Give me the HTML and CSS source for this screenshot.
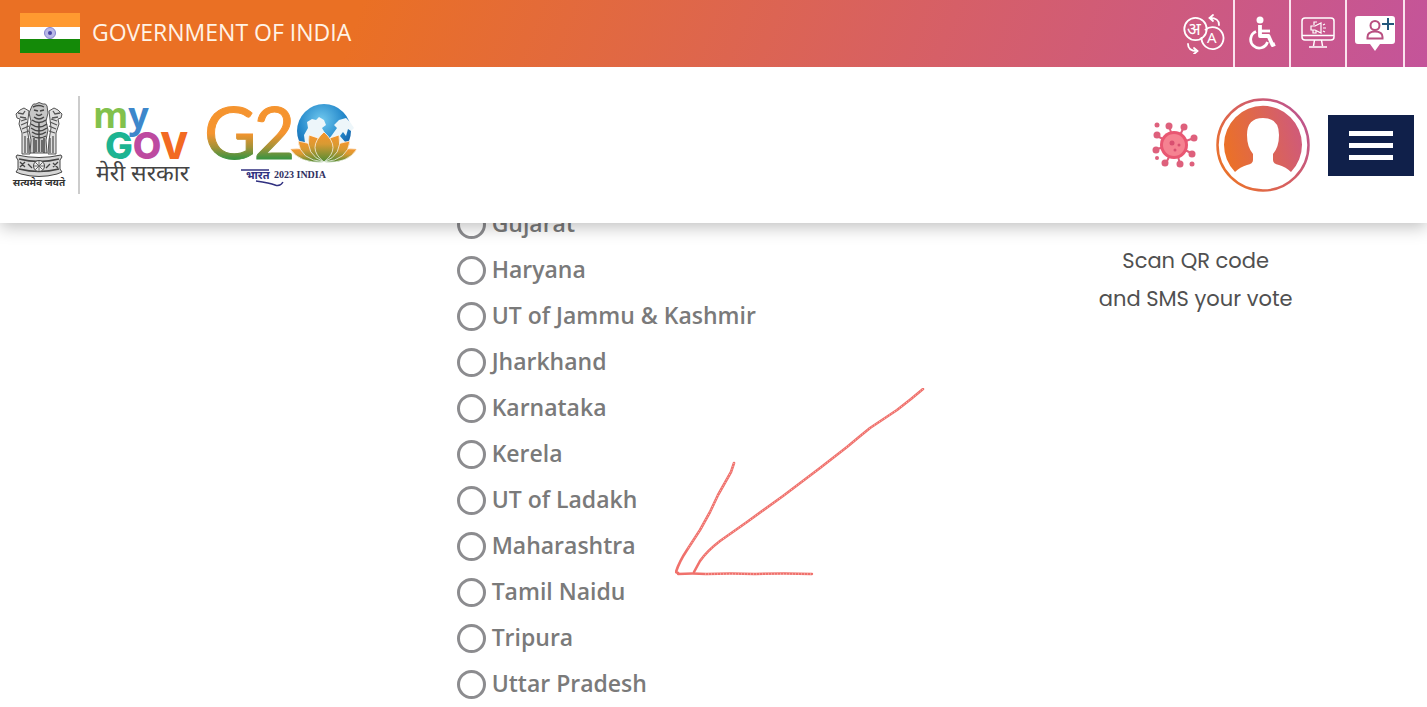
FILE: index.html
```html
<!DOCTYPE html>
<html lang="en">
<head>
  <meta charset="UTF-8">
  <meta name="viewport" content="width=device-width, initial-scale=1.0">
  <title>MyGov | Vote</title>
  <link rel="stylesheet" href="styles.css">
</head>
<body>
  <header class="site-header">
    <div class="topbar">
      <a class="gov" href="#">
        <svg class="flag" viewBox="0 0 60 40" aria-hidden="true">
          <rect width="60" height="14" fill="#ff9a30"/>
          <rect y="14" width="60" height="12" fill="#fff"/>
          <rect y="26" width="60" height="14" fill="#148a08"/>
          <circle cx="30" cy="20" r="5.500" fill="#b9b9e6" stroke="#8685cf"/>
          <circle cx="30" cy="20" r="2" fill="#4745a5"/>
        </svg>
        <span>GOVERNMENT OF INDIA</span>
      </a>
      <nav class="tools">
        <a class="tool" href="#" aria-label="Change language">
          <svg width="42" height="42" viewBox="0 0 42 42" fill="none" stroke="#fff" stroke-width="1.800" stroke-linecap="round">
            <circle cx="12.500" cy="17" r="11.200"/>
            <path d="M22.500 17.600A11 11 0 1 1 18.500 26"/>
            <text class="tool-hi" x="4" y="23">अ</text>
            <text class="tool-en" x="24" y="31">A</text>
            <path d="M36 13c0-5-3-7-9-7M30 3l-3.500 3 3.500 3M5 32c0 5 3 7 9 7M11 36l3.500 3-3.500 3"/>
          </svg>
        </a>
        <a class="tool" href="#" aria-label="Accessibility">
          <svg width="28" height="34" viewBox="0 0 28 34" fill="none" stroke="#fff" stroke-linejoin="round">
            <circle cx="12" cy="4" r="3.500" fill="#fff" stroke="none"/>
            <path d="M12 9v11h8.500l4 9 2.500-1" stroke-width="3.800"/>
            <path d="M12.500 15H22" stroke-width="2.800"/>
            <path d="M8 15.500A8.600 8.600 0 1 0 19.500 26" stroke-width="2.800"/>
          </svg>
        </a>
        <a class="tool" href="#" aria-label="Screen reader">
          <svg width="34" height="32" viewBox="0 0 34 32" fill="none" stroke="#fff" stroke-width="1.500">
            <rect x="1" y="1" width="32" height="22" rx="3"/>
            <path d="M1 18.500h32M13.500 23l-1 6M20.500 23l1 6M8 30h18"/>
            <path d="M10 9h4l6-3v10l-6-3h-4zM12 13v3h3v-2M13 8V5h3M22 8l2-1M22 11h3M22 14l2 1" stroke-width="1.200"/>
          </svg>
        </a>
        <a class="tool" href="#" aria-label="Register">
          <svg width="40" height="36" viewBox="0 0 40 36">
            <path d="M3 1h34a3 3 0 0 1 3 3v22a3 3 0 0 1-3 3H25l-5 7-5-7H3a3 3 0 0 1-3-3V4a3 3 0 0 1 3-3z" fill="#fff"/>
            <circle cx="20" cy="10.500" r="4.500" fill="none" stroke="#b94f80" stroke-width="2"/>
            <path d="M12.500 23.500v-1.500c0-3.500 3-5.500 7.500-5.500s7.500 2 7.500 5.500v1.500z" fill="none" stroke="#b94f80" stroke-width="2"/>
            <path d="M33 3v12M27 9h12" stroke="#24577c" stroke-width="2"/>
          </svg>
        </a>
      </nav>
    </div>

    <div class="navbar">
      <div class="brand">
        <a class="emblem" href="#" aria-label="Satyameva Jayate">
          <svg width="54" height="90" viewBox="0 0 54 90" fill="none" stroke="#555" stroke-width="1">
            <!-- centre lion -->
            <path d="M20 6q1-3 4-2l3-1.500 4 1.500q3-1 4 2l1 7-2 8 2 9-2 10 1 13H18l1-13-2-10 2-9-2-8z" fill="#c6c6c6"/>
            <path d="M21 7q6-3 11 0M22 10l4 1M28 11l4-1M24 14q3 3 6 0M22 17q5 4 10 0M20 20q7 5 14 0M19 24q8 6 16 0M19 28q8 6 16 0M20 32q7 5 14 0M20 36q7 4 14 0M27 22v30M22 38v15M32 38v15M24 40v12M30 40v12" stroke="#444" stroke-width="1.400"/>
            <!-- side lions -->
            <path d="M17 11l-5-3-4 2-4 4 1 4 3 1-1 5 3 9v21h8l-1-14-2-12zM37 11l5-3 4 2 4 4-1 4-3 1 1 5-3 9v21h-8l1-14 2-12z" fill="#dedede"/>
            <path d="M6 13l5 1 2-3M8 17l6 1M9 21l6-2M9 25l7-3M10 29l7-3M11 33l6-2M13 36v17M16 38v15M48 13l-5 1-2-3M46 17l-6 1M45 21l-6-2M45 25l-7-3M44 29l-7-3M43 33l-6-2M41 36v17M38 38v15" stroke="#555" stroke-width="1.300"/>
            <!-- abacus with wheel -->
            <path d="M5 55q22 5 44 0l1 2-2 3v9l2 3-5 2q-18 5-36 0l-5-2 2-3v-9l-2-3z" fill="#d6d6d6" stroke="#444"/>
            <path d="M7 59q20 5 40 0M7 69q20 5 40 0M8 62l5 5M13 62l-5 5M16 64l4 4M38 64l-4 4M41 63l5 5M46 62l-5 5" stroke="#444" stroke-width="1.300"/>
            <circle cx="27" cy="66" r="5.500" fill="#eee" stroke="#444"/>
            <path d="M27 61v10M22 66h10M23.500 62.500l7 7M30.500 62.500l-7 7" stroke="#666"/>
            <text class="motto" x="27" y="86" text-anchor="middle">सत्यमेव जयते</text>
          </svg>
        </a>
        <a class="mygov" href="#" aria-label="MyGov">
          <svg width="98" height="84" viewBox="0 0 98 84">
            <text class="logo-my" x="-1" y="25"><tspan fill="#82c14c">m</tspan><tspan fill="#3d87cb">y</tspan></text>
            <text class="logo-gov" x="11" y="56"><tspan fill="#1db492">G</tspan><tspan fill="#bd4aa0">O</tspan><tspan fill="#f26a22">V</tspan></text>
            <text class="logo-hi" x="2" y="78">मेरी सरकार</text>
          </svg>
        </a>
        <a class="g20" href="#" aria-label="G20 India 2023">
          <svg width="152" height="84" viewBox="0 0 152 84">
            <defs>
              <linearGradient id="tricolor" gradientUnits="userSpaceOnUse" x1="0" y1="3" x2="0" y2="58">
                <stop offset=".5" stop-color="#f5942f"/>
                <stop offset=".75" stop-color="#a39238"/>
                <stop offset=".95" stop-color="#3f9441"/>
              </linearGradient>
              <linearGradient id="petal" x1="0" y1="0" x2="0" y2="1">
                <stop offset="0" stop-color="#f7952c"/>
                <stop offset=".4" stop-color="#d99a32"/>
                <stop offset="1" stop-color="#4f8c34"/>
              </linearGradient>
              <radialGradient id="globe" cx=".45" cy=".3" r=".7">
                <stop offset="0" stop-color="#70c8ee"/>
                <stop offset=".6" stop-color="#2589cb"/>
                <stop offset="1" stop-color="#115ca5"/>
              </radialGradient>
            </defs>
            <text class="g20-letter" x="-2" y="56">G<tspan dx="-3">2</tspan></text>
            <circle cx="118" cy="28" r="27" fill="url(#globe)"/>
            <path d="M101 19l5-3 4 1 3-3 5 3 2 5-4 3 3 5-2 4 3 6 6-8 5-7-3-3 5-5 7-2 4 4 4 6-3 3-3-2-2 7-3-4-3 4 6 7-6 8-9 3-20-2-6-9-1-8 4-7z" fill="#edf6fa"/>
            <g fill="url(#petal)" stroke="#fff" stroke-width=".7">
              <path d="M84 46q22-3 34 13-24 2-34-13zM151 46q-22-3-33 13 24 2 33-13z"/>
              <path d="M92 38q20 2 26 21-24-2-26-21zM144 38q-20 2-26 21 24-2 26-21z"/>
              <path d="M103 32l9 3 6 24q-19-7-15-27zM133 32l-9 3-6 24q19-7 15-27z"/>
              <path d="M118 29q-18 16 0 30 18-14 0-30z"/>
            </g>
            <text class="g20-hi" x="40" y="76">भारत</text>
            <path d="M35 67h28M50 78q14 2 19 4 5 2 8-3" fill="none" stroke="#303080" stroke-width="1.400"/>
            <text class="g20-sub" x="68" y="75">2023 INDIA</text>
          </svg>
        </a>
      </div>

      <div class="actions">
        <a class="covid" href="#" aria-label="COVID-19">
          <svg width="46" height="46" viewBox="0 0 46 46" fill="#de607c">
            <path d="M23 23L17 4M23 23l9-18M23 23l19-7M23 23l18 9M23 23l5 19M23 23l-9 18M23 23L4 27M23 23L5 14" stroke="#de607c" stroke-width="2"/>
            <circle cx="17" cy="4" r="3.500"/><circle cx="32" cy="5" r="3.500"/><circle cx="42" cy="16" r="3.500"/><circle cx="40" cy="32" r="3.500"/>
            <circle cx="28" cy="42" r="3.500"/><circle cx="13" cy="41" r="3.500"/><circle cx="4" cy="28" r="3.500"/><circle cx="5" cy="13" r="3.500"/>
            <circle cx="5" cy="3" r="2.500"/><circle cx="5" cy="36" r="2"/><circle cx="40" cy="42" r="2.500"/>
            <circle cx="22" cy="23" r="14" fill="#e95772"/>
            <circle cx="22" cy="23" r="11" fill="#f58291"/>
            <circle cx="20" cy="21" r="2.500" fill="#d94f70"/><circle cx="27" cy="23" r="1.500" fill="#d94f70"/><circle cx="23" cy="28" r="1.500" fill="#d94f70"/>
          </svg>
        </a>
        <a class="avatar" href="#" aria-label="Sign in">
          <svg width="94" height="94" viewBox="0 0 94 94">
            <defs>
              <linearGradient id="ring" x1="0" y1=".8" x2="1" y2=".2">
                <stop offset="0" stop-color="#ec7425"/>
                <stop offset=".45" stop-color="#d9615a"/>
                <stop offset="1" stop-color="#bc5490"/>
              </linearGradient>
              <linearGradient id="face" x1="0" y1=".6" x2="1" y2=".4">
                <stop offset="0" stop-color="#eb7127"/>
                <stop offset="1" stop-color="#cf5a7b"/>
              </linearGradient>
            </defs>
            <circle cx="47" cy="47" r="45.500" fill="#fff" stroke="url(#ring)" stroke-width="2.500"/>
            <path d="M19 74a39 39 0 1 1 56 0q-5-5-12-7-6-1-6-5v-6q6-7 6-19 0-17-16-17T31 37q0 12 6 19v6q0 4-6 5-7 2-12 7z" fill="url(#face)"/>
          </svg>
        </a>
        <button class="menu" type="button" aria-label="Menu">
          <span class="menu-bar"></span>
          <span class="menu-bar"></span>
          <span class="menu-bar"></span>
        </button>
      </div>
    </div>
  </header>

  <main class="poll">
    <form class="states">
      <label class="state"><input type="radio" name="state"><span>Gujarat</span></label>
      <label class="state"><input type="radio" name="state"><span>Haryana</span></label>
      <label class="state"><input type="radio" name="state"><span>UT of Jammu &amp; Kashmir</span></label>
      <label class="state"><input type="radio" name="state"><span>Jharkhand</span></label>
      <label class="state"><input type="radio" name="state"><span>Karnataka</span></label>
      <label class="state"><input type="radio" name="state"><span>Kerela</span></label>
      <label class="state"><input type="radio" name="state"><span>UT of Ladakh</span></label>
      <label class="state"><input type="radio" name="state"><span>Maharashtra</span></label>
      <label class="state"><input type="radio" name="state"><span>Tamil Naidu</span></label>
      <label class="state"><input type="radio" name="state"><span>Tripura</span></label>
      <label class="state"><input type="radio" name="state"><span>Uttar Pradesh</span></label>
      <svg class="arrow" width="252" height="190" viewBox="0 0 252 190" aria-hidden="true">
        <g fill="none" stroke="#f0716c" stroke-width="2.600" stroke-linecap="round" stroke-linejoin="round">
          <path d="M248 1L236 11 222 22 207 32 195 40 184 49 172 59 145 80 108 108 72 134 45 153Q32 163 25 173L19 184"/>
          <path d="M59 75L56 84 43 107 35 124 25 142 12 162Q4 174 1 184l2 1"/>
          <path d="M3 186q15-1 28 0 25-1 49 0 30-1 57 0" stroke-width="2.400"/>
        </g>
        <g fill="none" stroke="#fff" stroke-width="1" stroke-dasharray="1 2" opacity=".6">
          <path d="M248 1L236 11 222 22 207 32 195 40 184 49 172 59 145 80 108 108 72 134 45 153Q32 163 25 173"/>
          <path d="M59 75L56 84 43 107 35 124 25 142 12 162M30 186h107"/>
        </g>
      </svg>
    </form>
    <aside class="qr-note">
      <p>Scan QR code</p>
      <p>and SMS your vote</p>
    </aside>
  </main>
</body>
</html>
```

FILE: styles.css
```css
* {
  box-sizing: border-box;
}
body {
  margin: 0;
  background-color: #fff;
  font-family: "Open Sans", "Noto Sans", sans-serif;
}
a {
  color: inherit;
  text-decoration: none;
}
svg {
  display: block;
}

/* header */
.site-header {
  position: sticky;
  top: 0;
  z-index: 2;
  background-color: #fff;
  box-shadow: 0 4px 16px rgba(0, 0, 0, 0.25);
}
.topbar {
  display: flex;
  justify-content: space-between;
  height: 67px;
  padding: 0 22px 0 20px;
  background: linear-gradient(110deg, #ea7024 0%, #ea7024 25%, #d65f67 66%, #c4549a 100%);
}
.gov {
  display: flex;
  align-items: center;
  gap: 12px;
  padding-bottom: 2px;
  color: #fff3e6;
  font-size: 23px;
  line-height: 32px;
}
.gov span {
  padding-bottom: 2px;
}
.flag {
  width: 60px;
  height: 40px;
}
.tools {
  display: flex;
}
.tool {
  display: flex;
  align-items: center;
  justify-content: center;
  min-width: 56px;
  padding: 0 8px 2px;
  border-right: 2px solid #fbe3ee;
}
.tool-hi,
.tool-en {
  fill: #fff;
  stroke: none;
  font-size: 18px;
  font-family: "Noto Sans", sans-serif;
}
.tool-en {
  font-size: 15px;
}
.navbar {
  display: flex;
  align-items: center;
  justify-content: space-between;
  height: 156px;
  padding: 0 13px 0 12px;
}
.brand {
  display: flex;
  align-items: center;
}
.emblem {
  display: flex;
  align-items: center;
  height: 98px;
  padding-right: 12px;
  border-right: 2px solid #ccc;
}
.motto {
  fill: #333;
  stroke: none;
  font: bold 10px "Noto Sans", sans-serif;
}
.mygov {
  padding-left: 14px;
}
.mygov svg,
.g20 svg {
  overflow: visible;
}
.logo-my {
  font: bold 36px "Open Sans", sans-serif;
}
.logo-gov {
  font: 800 37px Inter, sans-serif;
}
.logo-hi {
  fill: #444;
  font: 23px "Noto Sans", sans-serif;
}
.g20 {
  padding-left: 14px;
}
.g20-letter {
  fill: url(#tricolor);
  stroke: url(#tricolor);
  stroke-width: 1px;
  font: 72px Lato, sans-serif;
}
.g20-hi {
  fill: #303080;
  font: bold 11px "Noto Sans", sans-serif;
}
.g20-sub {
  fill: #303060;
  font: bold 10px "Liberation Serif", serif;
}
.actions {
  display: flex;
  align-items: center;
  gap: 18px;
}
.menu {
  display: flex;
  flex-direction: column;
  align-items: center;
  justify-content: center;
  gap: 7px;
  width: 86px;
  height: 61px;
  padding: 0;
  border: none;
  background-color: #10204a;
  cursor: pointer;
}
.menu-bar {
  width: 44px;
  height: 5px;
  background-color: #fff;
}

/* poll options */
.poll {
  display: grid;
  grid-template-columns: 32% 36% 32%;
  margin-top: -22px;
}
.states {
  position: relative;
  grid-column: 2;
}
.state {
  display: flex;
  align-items: center;
  gap: 6px;
  height: 46px;
  color: #7a7a7a;
  font-size: 23px;
  font-weight: 600;
  line-height: 32px;
}
.state span {
  padding-bottom: 2px;
}
.state input {
  appearance: none;
  width: 29px;
  height: 29px;
  margin: 0;
  border: 3px solid #8c8c8f;
  border-radius: 50%;
  background-color: #fff;
}
.state input:checked {
  background-color: #8c8c8f;
}
.arrow {
  position: absolute;
  top: 187px;
  left: 218px;
}
.qr-note {
  padding: 41px 6px 0 0;
  color: #505050;
  font-family: Poppins, Inter, sans-serif;
  font-size: 21px;
  line-height: 38px;
  text-align: center;
}
.qr-note p {
  margin: 0;
}
```
